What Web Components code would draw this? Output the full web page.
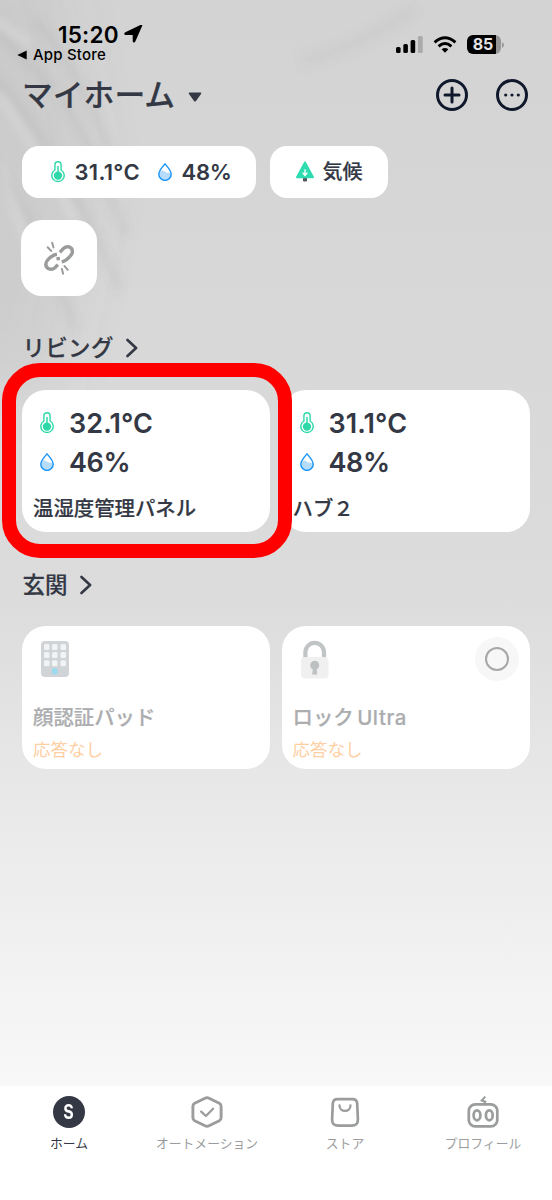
<!DOCTYPE html>
<html lang="ja">
<head>
<meta charset="utf-8">
<title>マイホーム</title>
<style>
html,body{margin:0;padding:0}
body{font-family:Inter,"Noto Sans CJK JP",sans-serif;color:#333844;width:552px;height:1200px;overflow:hidden}
</style>
</head>
<body>
<home-screen></home-screen>
<script>
const define = (name, html) => customElements.define(name, class extends HTMLElement {
  constructor() {
    super();
    const t = document.createElement('template');
    t.innerHTML = html;
    this.attachShadow({mode: 'open'}).appendChild(t.content.cloneNode(true));
  }
});

/* Icons */
define('icon-thermo', `<style>:host{display:block;width:14px;height:22px}svg{display:block}</style>
<svg width="14" height="22" viewBox="0 0 14 22" fill="none"><path d="M3.900 9V3.800a3.100 3.100 0 0 1 6.200 0V9a6.200 6.200 0 1 1-6.200 0Z" stroke="#2ed8a9" stroke-width="1.400"/><circle cx="7" cy="14.600" r="4.200" fill="#2ed8a9"/><path d="M7 5v9" stroke="#2ed8a9" stroke-width="1.500"/></svg>`);

define('icon-drop', `<style>:host{display:block;width:14px;height:18px}svg{display:block}</style>
<svg width="14" height="18" viewBox="0 0 14 18" fill="none"><path d="M1.200 9C3.500 6.300 5.700 7.500 7.500 8.900c1.900 1.300 3.700 1 5.300.3C14.600 14 11 17 7 17S.2 14 1.200 9Z" fill="#b5dcfb"/><path d="M7 .9C5 3.400.8 7.400.8 11.200a6.200 6.200 0 0 0 12.400 0C13.200 7.400 9 3.400 7 .9Z" stroke="#1694fa" stroke-width="1.400"/></svg>`);

define('icon-tree', `<style>:host{display:block;width:18px;height:21px}svg{display:block}</style>
<svg width="18" height="21" viewBox="0 0 18 21"><rect x="7" y="16" width="4" height="4.500" rx=".8" fill="#54585e"/><path d="M9 1.500 17 16.200H1Z" fill="#2edcb0" stroke="#2edcb0" stroke-width="2" stroke-linejoin="round"/><path d="M9 8.500v6M6.600 11.600 9 14.400l2.400-2.800" fill="none" stroke="#fff" stroke-width="1.400"/></svg>`);

define('icon-unlink', `<style>:host{display:block;width:32px;height:36px}svg{display:block}</style>
<svg width="32" height="36" viewBox="0 0 32 36" fill="none" stroke="#9a9b9b" stroke-width="3.400"><path d="M16.900 12.300 20 8.900C23.600 4.800 29.500 7 29.400 11.600 29.400 13.600 28.500 14.900 27 16.400 24.500 18.900 22.500 21.400 18.700 21.900"/><path d="M13.900 14.300C10 14.700 7 17.500 5 19.600 3.500 21.200 2.700 22.500 2.800 24.400 3 29.200 8.600 30.500 12 27.700L14.900 24.600"/><path d="m13.500 18.900 3.400-.6" stroke-width="3.400"/><path d="m4.700 7.200 3.400 3.700M9.200 2.800l1.300 4.700M18.900 28.900l1.200 4.800M21.500 26.100l3.300 3.700" stroke-width="2" stroke-linecap="round"/></svg>`);

define('icon-keypad', `<style>:host{display:block;width:28px;height:36px}svg{display:block}</style>
<svg width="28" height="36" viewBox="0 0 28 36"><rect width="28" height="36" rx="4" fill="#d1d4d6"/><g fill="#f2f3f4"><rect x="3" y="3" width="5.500" height="6" rx="1.500"/><rect x="11" y="3" width="5.500" height="6" rx="1.500"/><rect x="19.500" y="3" width="5.500" height="6" rx="1.500"/><rect x="3" y="11" width="5.500" height="6" rx="1.500"/><rect x="11" y="11" width="5.500" height="6" rx="1.500"/><rect x="19.500" y="11" width="5.500" height="6" rx="1.500"/><rect x="3" y="19.300" width="5.500" height="6" rx="1.500"/><rect x="11" y="19.300" width="5.500" height="6" rx="1.500"/><rect x="19.500" y="19.300" width="5.500" height="6" rx="1.500"/></g><rect x="11" y="27.300" width="5.500" height="6" rx="1.500" fill="#99daf3"/></svg>`);

define('icon-lock', `<style>:host{display:block;width:28px;height:39px}svg{display:block}</style>
<svg width="28" height="39" viewBox="0 0 28 39"><path d="M4.400 19v-6.800a9.300 9.300 0 0 1 18.600 0V19" fill="none" stroke="#c0c4c5" stroke-width="4.200"/><rect y="17" width="27.500" height="21.500" rx="4" fill="#f0f0f0"/><circle cx="13.700" cy="25.300" r="4.500" fill="#bec1c2"/><path d="M12.200 27h3l1.100 7.500h-5.200Z" fill="#bec1c2"/></svg>`);

define('icon-home', `<style>:host{display:grid;place-items:center;width:32px;height:32px;border-radius:50%;background:#333844;color:#fff;font:700 20px/32px Inter,sans-serif}span{transform:scaleX(.8)}</style><span>S</span>`);
define('icon-auto', `<style>:host{display:block;width:32px;height:32px}svg{display:block}</style>
<svg width="32" height="32" viewBox="0 0 32 32" fill="none" stroke="#9b9c9c" stroke-linecap="round" stroke-linejoin="round"><path d="M14 2.200Q16 1.100 18 2.200L28.300 7.300Q30.100 8.300 30.100 10.200V21.800Q30.100 23.700 28.300 24.700L18 29.800Q16 30.900 14 29.800L3.700 24.700Q1.900 23.700 1.900 21.800V10.200Q1.900 8.300 3.700 7.300Z" stroke-width="2.900"/><path d="m10.200 15.600 4.700 4.400 7.200-7.200" stroke-width="2.300"/></svg>`);
define('icon-store', `<style>:host{display:block;width:32px;height:32px}svg{display:block}</style>
<svg width="32" height="32" viewBox="0 0 32 32" fill="none" stroke="#9b9c9c" stroke-width="2.700" stroke-linecap="round"><path d="M8.500 3.200h15q4.400 0 4.700 4.500L28.900 23.500q.1 6.200-6.200 6.200H9.300Q3 29.700 3.100 23.500L3.800 7.700q.3-4.500 4.700-4.500Z"/><path d="M10.500 9.500c.3 7.200 10.700 7.200 11 0" stroke-width="2.300"/></svg>`);
define('icon-robot', `<style>:host{display:block;width:32px;height:32px}svg{display:block}</style>
<svg width="32" height="32" viewBox="0 0 32 32" fill="none" stroke="#9b9c9c" stroke-width="2.700"><rect x="1.800" y="8.400" width="28.500" height="22" rx="6.500"/><ellipse cx="10" cy="19.300" rx="3.400" ry="5"/><ellipse cx="22.300" cy="19.300" rx="3.400" ry="5"/><path d="m18.300.6-3.600 3.900 3.600 1.200-1 2" stroke-width="2"/></svg>`);

/* Soft palm shadow over a light wall */
define('wall-paper', `<style>:host{position:absolute;inset:0;display:block;background:linear-gradient(#d3d3d3 0,#d6d6d6 220px,#d9d9d9 400px,#dcdcdc 600px,#e8e8e8 790px,#f1f1f1 950px,#f8f8f8 1086px)}svg{display:block}</style>
<svg width="552" height="620" fill="none"><defs><filter id="b" filterUnits="userSpaceOnUse" x="-60" y="-60" width="620" height="560"><feGaussianBlur stdDeviation="4.500"/></filter><filter id="w" filterUnits="userSpaceOnUse" x="-200" y="-200" width="600" height="800"><feGaussianBlur stdDeviation="28"/></filter></defs>
<path d="M-60-40H50L95 190 50 390H-60Z" fill="#777" fill-opacity=".1" filter="url(#w)"/>
<g filter="url(#b)" stroke="#777" stroke-opacity=".1" stroke-width="8"><path d="M35 20Q80 70 115 165"/><path d="M60 95Q95 150 125 235"/><path d="M-10 70Q60 150 120 290"/><path d="M-10 160Q40 220 75 330"/><path d="M-5 30 55 90"/><path d="M300 62Q365 45 415 8" stroke-opacity=".05" stroke-width="16"/></g>
<g filter="url(#b)" stroke="#fff" stroke-opacity=".24" stroke-width="6"><path d="M-5 20 30 45"/><path d="M0 95 45 165 75 220"/><path d="M0 165 30 250"/></g></svg>`);

define('status-bar', `<style>:host{display:flex;height:64px;justify-content:space-between;color:#000}
.l{padding:22px 0 0 17px}.t{display:flex;align-items:center;gap:5px;padding-left:41px;height:24px;font:600 22.500px/24px Inter,sans-serif;letter-spacing:.2px}
.t span{padding-top:1px}
.b{display:flex;align-items:center;gap:6px;height:17px;font:500 15px/17px Inter,sans-serif;letter-spacing:.2px}
.r{display:flex;padding:34px 51.500px 0 0;height:21px;align-items:center}
.bat{display:flex;align-items:center;justify-content:center;width:34px;height:19px;border-radius:6px;background:linear-gradient(90deg,#000 29px,#969696 29px);color:#e4e4e4;font:700 16px/19px Inter,sans-serif;margin-left:10px}
.bat span{padding-right:1px}svg{display:block}</style>
<div class="l"><div class="t"><span>15:20</span><svg width="19" height="18" viewBox="0 0 19 18"><path d="M17.400.8 10.600 16.200q-.7 1.300-1.100-.1V9.200H1.900q-1.600-.3-.2-1.200L16.800.7q1-.4.6.1Z" fill="#000" stroke="#000" stroke-width="1.600" stroke-linejoin="round"/></svg></div>
<div class="b"><svg width="10" height="10"><path d="M.3 5 9.700.4v9.200Z"/></svg><span>App Store</span></div></div>
<div class="r"><svg width="27" height="17"><rect y="11" width="4.600" height="6" rx="1.500"/><rect x="7.300" y="8" width="4.600" height="9" rx="1.500"/><rect x="14.600" y="4" width="4.600" height="13" rx="1.500"/><rect x="21.900" y="0" width="4.800" height="17" rx="1.500" fill="#aaa"/></svg>
<svg width="24" height="17" viewBox="0 0 24 17" style="margin-left:10px" fill="none" stroke="#000" stroke-width="3"><path d="M1.600 6.300q10.400-9.100 20.800 0M5.600 10.400q6.400-5.700 12.800 0"/><path d="M12 16.700 8.600 13.300q3.400-2.700 6.800 0Z" fill="#000" stroke="none"/></svg>
<div class="bat"><span>85</span></div><svg width="3" height="6" style="margin-left:1px;margin-right:-4px"><path d="M0 0q4 3 0 6Z" fill="#969696"/></svg></div>`);

define('home-header', `<style>:host{display:flex;height:62px;align-items:center;padding:0 24px 0 22px;box-sizing:border-box}
h1{margin:0;font-weight:500;font-size:30.800px;line-height:40px;-webkit-text-stroke:.2px}svg{display:block}</style>
<h1><slot></slot></h1><svg width="16" height="12" style="margin:3px auto 0 12px"><path d="M2.500 1.500h11q1.500 0 .5 1.500L9 10q-1 1.200-2 0L2 3Q1 1.500 2.500 1.500Z" fill="#333844"/></svg>
<svg width="32" height="32" fill="none" stroke="#10182b" stroke-width="3" stroke-linecap="round"><circle cx="16" cy="16" r="14.500"/><path d="M16 9v14M9 16h14"/></svg>
<svg width="32" height="32" style="margin-left:28px"><circle cx="16" cy="16" r="14.500" fill="none" stroke="#10182b" stroke-width="3"/><g fill="#10182b"><circle cx="9.700" cy="16" r="1.600"/><circle cx="16" cy="16" r="1.600"/><circle cx="22.300" cy="16" r="1.600"/></g></svg>`);

define('info-pill', `<style>:host{display:flex;align-items:center;height:52px;box-sizing:border-box;border-radius:17px;background:#fff;font-weight:600;font-size:22px;line-height:26px}</style><slot></slot>`);

define('room-title', `<style>:host{display:flex;align-items:center;gap:12px;height:34px;padding-left:22.500px}
h2{margin:0;font-weight:500;font-size:22.500px;line-height:34px;letter-spacing:var(--track,0);-webkit-text-stroke:.2px}svg{display:block}</style>
<h2><slot></slot></h2><svg width="12" height="20" fill="none" stroke="#333844" stroke-width="2.600" stroke-linecap="round" stroke-linejoin="round"><path d="m1.500 2 8.600 8-8.600 8"/></svg>`);

define('card-row', `<style>:host{display:grid;grid-template-columns:248px 248.500px;gap:11.500px;margin-left:22px}</style><slot></slot>`);

define('sensor-card', `<style>:host{display:block;height:142px;border-radius:24px;background:#fff;box-sizing:border-box;padding:14px 11px 0}
.m{display:flex;align-items:center;height:38.500px;padding-left:7px;font-weight:600;font-size:27px;gap:15px;letter-spacing:.1px}
.m+.m{letter-spacing:-.4px}.m ::slotted(span){padding-top:1px}
.n{margin-top:13px;height:30px;font-size:20.400px;line-height:30px;font-weight:500;-webkit-text-stroke:.2px}</style>
<div class="m"><icon-thermo></icon-thermo><slot name="temp"></slot></div><div class="m"><icon-drop></icon-drop><slot name="hum"></slot></div><div class="n"><slot></slot></div>`);

define('device-card', `<style>:host{display:block;height:142.500px;border-radius:24px;background:#fff;box-sizing:border-box;padding:11px 11px 0;color:#acadaf}
.top{display:flex;justify-content:space-between;height:65.500px;padding-left:8px}
.n{height:30px;font-size:20.400px;line-height:30px;font-weight:500;-webkit-text-stroke:.2px}
.s{margin-top:4px;font-size:17.500px;line-height:26px;color:#ffcfa4}</style>
<div class="top"><slot name="icon"></slot><slot name="action"></slot></div><div class="n"><slot></slot></div><div class="s"><slot name="state"></slot></div>`);

define('round-button', `<style>:host{display:grid;place-items:center;width:44px;height:44px;border-radius:50%;background:#f7f7f7}i{width:20px;height:20px;border:2px solid #a6a7a9;border-radius:50%}</style><i></i>`);

define('tab-item', `<style>:host{display:flex;flex-direction:column;align-items:center;padding-top:10px;gap:6px;color:#9b9c9c;font-size:12.800px;line-height:20px}:host([active]){color:#333844}</style><slot name="icon"></slot><span><slot></slot></span>`);
define('tab-bar', `<style>:host{display:grid;grid-template-columns:repeat(4,138px);height:114px;background:#fff;margin-top:auto}</style><slot></slot>`);
define('focus-frame', `<style>:host{position:absolute;left:1.500px;top:363px;width:290px;height:194.500px;box-sizing:border-box;border:14.500px solid #f00;border-radius:38px}</style>`);

define('home-screen', `<style>:host{display:block;position:relative;width:552px;height:1200px}
main{position:relative;height:1200px;display:flex;flex-direction:column}
.pills{display:flex;gap:14px;margin:19.500px 0 0 22px}
.square{display:grid;place-items:center;width:76px;height:76.500px;border-radius:21px;background:#fff;margin:22px 0 35px 21px}
.gap{margin-top:36px}</style>
<wall-paper></wall-paper>
<main><status-bar></status-bar><home-header>マイホーム</home-header>
<div class="pills"><info-pill style="width:234px;padding-left:29px"><icon-thermo></icon-thermo><span style="margin-left:9.500px;letter-spacing:.3px">31.1°C</span><icon-drop style="margin-left:auto"></icon-drop><span style="margin:0 24.500px 0 10px;letter-spacing:-.3px">48%</span></info-pill>
<info-pill style="width:118px;padding-left:26px"><icon-tree></icon-tree><span style="margin-left:8.500px;font-size:20px;font-weight:500;padding-top:1px;-webkit-text-stroke:.2px">気候</span></info-pill></div>
<div class="square"><icon-unlink></icon-unlink></div>
<room-title style="--track:.3px">リビング</room-title>
<card-row style="margin-top:25px"><sensor-card><span slot="temp">32.1°C</span><span slot="hum">46%</span>温湿度管理パネル</sensor-card><sensor-card><span slot="temp">31.1°C</span><span slot="hum">48%</span>ハブ２</sensor-card></card-row>
<room-title class="gap">玄関</room-title>
<card-row style="margin-top:24px"><device-card><icon-keypad slot="icon" style="margin-top:4px"></icon-keypad>顔認証パッド<span slot="state">応答なし</span></device-card><device-card><icon-lock slot="icon" style="margin-top:2.500px"></icon-lock><round-button slot="action"></round-button>ロック<span style="margin-left:3.500px;letter-spacing:.6px">Ultra</span><span slot="state">応答なし</span></device-card></card-row>
<tab-bar><tab-item active><icon-home slot="icon"></icon-home>ホーム</tab-item><tab-item><icon-auto slot="icon"></icon-auto>オートメーション</tab-item><tab-item><icon-store slot="icon"></icon-store>ストア</tab-item><tab-item><icon-robot slot="icon"></icon-robot>プロフィール</tab-item></tab-bar></main>
<focus-frame></focus-frame>`);
</script>
</body>
</html>
